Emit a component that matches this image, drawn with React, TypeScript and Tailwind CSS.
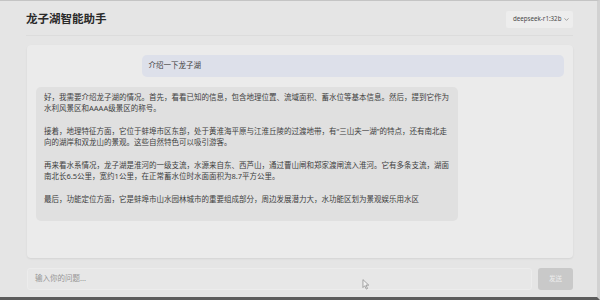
import { ChevronDown } from 'lucide-react';

const paragraphs = [
  '好，我需要介绍龙子湖的情况。首先，看看已知的信息，包含地理位置、流域面积、蓄水位等基本信息。然后，提到它作为水利风景区和AAAA级景区的称号。',
  '接着，地理特征方面，它位于蚌埠市区东部，处于黄淮海平原与江淮丘陵的过渡地带，有“三山夹一湖”的特点，还有南北走向的湖岸和双龙山的景观。这些自然特色可以吸引游客。',
  '再来看水系情况，龙子湖是淮河的一级支流，水源来自东、西芦山，通过曹山闸和郑家渡闸流入淮河。它有多条支流，湖面南北长6.5公里，宽约1公里，在正常蓄水位时水面面积为8.7平方公里。',
  '最后，功能定位方面，它是蚌埠市山水园林城市的重要组成部分，周边发展潜力大，水功能区划为景观娱乐用水区',
];

export default function App() {
  return (
    <div className="relative flex h-[300px] w-[600px] flex-col overflow-hidden border-t border-b-[3px] border-r-[3px] border-t-[#c4c4c4] border-b-[#5c5c5c] border-r-[#d2d2d2] bg-[#e5e5e5] font-['Noto_Sans','Noto_Sans_CJK_SC',sans-serif]">
      {/* header */}
      <div className="mx-[26px] mr-[24px] flex h-[35px] flex-none items-center justify-between border-b border-[#dcdcdc] pt-[2px]">
        <h1 className="text-[11.5px] font-bold text-[#2a2a2a]">龙子湖智能助手</h1>
        <div className="flex h-[17px] w-[67px] items-center justify-between rounded-[2px] bg-[#ededed] pl-[7px] pr-[3px] text-[6.2px] text-[#4a4a4a]">
          <span>deepseek-r1:32b</span>
          <ChevronDown className="h-[7px] w-[7px] text-[#666]" strokeWidth={2} />
        </div>
      </div>

      {/* chat panel */}
      <div className="ml-[27px] mr-[24px] mt-[9px] flex h-[213px] flex-none flex-col gap-[10px] rounded-[4px] bg-[#ebebeb] px-[9px] pt-[10px] shadow-[0_1px_2px_rgba(0,0,0,0.08)]">
        <div className="flex justify-end">
          <div className="w-[80%] rounded-[5px] bg-[#dde0ea] px-[7px] py-[5px] text-[7.5px] leading-[11.5px] text-[#3e3e3e]">
            介绍一下龙子湖
          </div>
        </div>
        <div className="flex justify-start">
          <div className="w-[80%] rounded-[5px] bg-[#e0e0e0] px-[8px] pb-[5px] pt-[5px] text-[7.5px] leading-[11.5px] text-[#3e3e3e]">
            {paragraphs.map((p, i) => (
              <p key={i} className="mb-[11px]">{p}</p>
            ))}
          </div>
        </div>
      </div>

      {/* input row */}
      <div className="ml-[27px] mr-[24px] mt-[10px] flex h-[22px] flex-none gap-[6px]">
        <div className="flex flex-1 items-center rounded-[3px] border border-[#ececec] bg-[#e7e7e7] px-[7px] text-[7.5px] text-[#959595]">
          输入你的问题...
        </div>
        <button className="w-[35px] rounded-[3px] bg-[#c9c9c9] text-[6.5px] text-[#ededed]">发送</button>
      </div>

      {/* mouse pointer */}
      <svg viewBox="0 0 12 18" className="absolute left-[362px] top-[278px] h-[11px] w-[8px]">
        <path d="M1 1 L1 14 L4 11 L6.5 16.5 L8.5 15.5 L6 10 L10.5 10 Z" fill="#f2f2f2" stroke="#8a8a8a" strokeWidth={1.2} strokeLinejoin="round" />
      </svg>
    </div>
  );
}
